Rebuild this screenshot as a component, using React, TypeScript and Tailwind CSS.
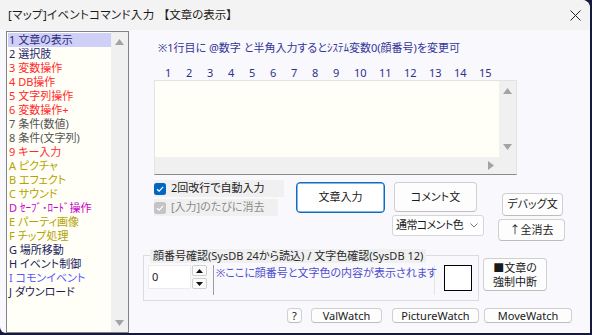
import React from 'react';

const items = [
  { t: '1 文章の表示', c: 'text-[#2c2c7c]' },
  { t: '2 選択肢', c: 'text-[#262670]' },
  { t: '3 変数操作', c: 'text-[#ff2a2a]' },
  { t: '4 DB操作', c: 'text-[#ff2a2a]' },
  { t: '5 文字列操作', c: 'text-[#ff2a2a]' },
  { t: '6 変数操作+', c: 'text-[#ff2a2a]' },
  { t: '7 条件(数値)', c: 'text-[#555555]' },
  { t: '8 条件(文字列)', c: 'text-[#555555]' },
  { t: '9 キー入力', c: 'text-[#ff2a2a]' },
  { t: 'A ピクチャ', c: 'text-[#b3a300]' },
  { t: 'B エフェクト', c: 'text-[#b3a300]' },
  { t: 'C サウンド', c: 'text-[#b3a300]' },
  { t: 'D ｾｰﾌﾞ･ﾛｰﾄﾞ操作', c: 'text-[#c800c8]' },
  { t: 'E パーティ画像', c: 'text-[#b3a300]' },
  { t: 'F チップ処理', c: 'text-[#b3a300]' },
  { t: 'G 場所移動', c: 'text-[#20205c]' },
  { t: 'H イベント制御', c: 'text-[#20205c]' },
  { t: 'I コモンイベント', c: 'text-[#5a5aff]' },
  { t: 'J ダウンロード', c: 'text-[#1c1c50]' },
];

function Tri({ dir, color = '#a3a3a3' }: { dir: 'up' | 'down' | 'right'; color?: string }) {
  if (dir === 'right')
    return (
      <svg width="6" height="9" viewBox="0 0 6 9">
        <path d="M0 0 L6 4.5 L0 9Z" fill={color} />
      </svg>
    );
  return (
    <svg width="9" height="6" viewBox="0 0 9 6">
      <path d={dir === 'up' ? 'M0 6 L4.5 0 L9 6Z' : 'M0 0 L9 0 L4.5 6Z'} fill={color} />
    </svg>
  );
}

function Check({ bg }: { bg: string }) {
  return (
    <svg width="12" height="12" viewBox="0 0 12 12" className="shrink-0">
      <rect x="0" y="0" width="12" height="12" rx="2.5" fill={bg} />
      <path d="M3 6.2 L5.1 8.2 L9.2 3.8" stroke="#fff" strokeWidth="1.2" fill="none" />
    </svg>
  );
}

const btn =
  'rounded-[4px] border border-[#d0d0d0] border-b-[#bdbdbd] bg-[#fdfdfd] text-[#1a1a1a] flex items-center justify-center';

export default function App() {
  return (
    <div className="w-[592px] h-[335px] bg-[#17193a] font-['Noto_Sans','Noto_Sans_CJK_JP',sans-serif] [font-feature-settings:'palt'] text-[11px] text-[#1a1a1a]">
      <div className="w-[590px] h-[333px] bg-[#f9f9fd] rounded-tr-[8px] rounded-bl-[6px] overflow-hidden flex flex-col">
        {/* title bar */}
        <div className="h-[30px] bg-[#f3f3f3] flex items-center shrink-0 text-[11.5px] leading-[16px]">
          <span className="ml-[8px] tracking-[0.3px]">[マップ]イベントコマンド入力</span>
          <span className="ml-[9px]">【文章の表示】</span>
          <svg className="ml-auto mr-[9px]" width="11" height="11" viewBox="0 0 11 11">
            <path d="M0.5 0.5 L10.5 10.5 M10.5 0.5 L0.5 10.5" stroke="#222" strokeWidth="1" />
          </svg>
        </div>

        <div className="flex flex-1 min-h-0">
          {/* command list */}
          <div className="ml-[6px] mt-px w-[123px] h-[302px] border border-[#82828a] bg-[#fffff7] flex shrink-0">
            <div className="flex-1 pt-px pl-px">
              {items.map((it, i) => (
                <div
                  key={i}
                  className={`h-[14px] leading-[14px] pl-px whitespace-nowrap ${i === 0 ? 'bg-[#cfcff7]' : ''} ${it.c}`}
                >
                  {it.t}
                </div>
              ))}
            </div>
            <div className="w-[17px] bg-[#f0f0f0] flex flex-col items-center justify-between pt-[7px] pb-[6px]">
              <Tri dir="up" />
              <Tri dir="down" />
            </div>
          </div>

          {/* right side */}
          <div className="ml-[14px] w-[447px] flex flex-col">
            <div className="mt-[11px] pl-[15px] leading-[14px] text-[#34349a] whitespace-nowrap">
              ※1行目に @数字 と半角入力するとｼｽﾃﾑ変数0(顔番号)を変更可
            </div>
            <div className="mt-[11px] pl-[22px] flex leading-[14px] text-[#30308c]">
              {Array.from({ length: 15 }, (_, i) => (
                <span key={i} className={i < 9 ? 'w-[21px]' : 'w-[25px]'}>
                  {i + 1}
                </span>
              ))}
            </div>

            {/* message edit */}
            <div className="ml-[11px] w-[363px] h-[95px] border border-[#e3e3e3] border-b-[#8a8a8a] bg-[#fffff8] flex flex-col">
              <div className="flex flex-1 min-h-0">
                <div className="flex-1" />
                <div className="w-[17px] bg-[#f0f0f0] flex flex-col items-center justify-between pt-[7px] pb-[7px]">
                  <Tri dir="up" />
                  <Tri dir="down" />
                </div>
              </div>
              <div className="h-[17px] bg-[#f0f0f0] flex items-center justify-end pr-[22px]">
                <Tri dir="right" />
              </div>
            </div>

            {/* options + buttons */}
            <div className="flex mt-[5px] h-[62px]">
              <div className="ml-[11px] w-[130px] flex flex-col">
                <div className="h-[17px] bg-[#f0f0f0] flex items-center gap-[5px] whitespace-nowrap">
                  <Check bg="#0067c0" />
                  <span>2回改行で自動入力</span>
                </div>
                <div className="mt-[2px] w-[124px] h-[17px] bg-[#f0f0f0] flex items-center gap-[5px] text-[#8c8c8c] whitespace-nowrap">
                  <Check bg="#c4c4c4" />
                  <span>[入力]のたびに消去</span>
                </div>
              </div>
              <button className="ml-[12px] mt-[2px] w-[89px] h-[31px] rounded-[4px] border border-[#0f6cc4] bg-white shadow-[inset_0_0_0_0.5px_#0f6cc4] flex items-center justify-center">
                文章入力
              </button>
              <div className="ml-[7px] flex flex-col">
                <button className={`${btn} ml-[2px] mt-[2px] w-[83px] h-[30px]`}>コメント文</button>
                <div className="mt-[3px] w-[92px] h-[21px] rounded-[3px] border border-[#d6d6d6] bg-white flex items-center pl-[3px] pr-[5px] whitespace-nowrap">
                  <span className="tracking-[-0.6px]">通常コメント色</span>
                  <svg className="ml-auto" width="8" height="5" viewBox="0 0 8 5">
                    <path d="M0.5 0.5 L4 4 L7.5 0.5" stroke="#666" strokeWidth="0.9" fill="none" />
                  </svg>
                </div>
              </div>
              <div className="ml-[14px] flex flex-col">
                <button className={`${btn} ml-[4px] mt-[13px] w-[61px] h-[23px]`}>デバッグ文</button>
                <button className={`${btn} mt-[3px] w-[67px] h-[22px]`}>↑全消去</button>
              </div>
            </div>

            {/* face / color group */}
            <div className="flex mt-[7px]">
              <div className="relative w-[336px] pt-[6px]">
                <div className="h-[46px] border border-[#dcdcdc] flex pt-[9px] pl-[4px]">
                  <div className="w-[43px] h-[24px] bg-white border border-[#ececec] flex items-center pl-[3px]">0</div>
                  <div className="ml-px flex flex-col gap-[2px]">
                    <div className="w-[15px] h-[11px] border border-[#cfcfcf] bg-[#fbfbfb] rounded-[2px] flex items-center justify-center">
                      <svg width="7" height="4" viewBox="0 0 7 4">
                        <path d="M0 4 L3.5 0 L7 4Z" fill="#111" />
                      </svg>
                    </div>
                    <div className="w-[15px] h-[11px] border border-[#cfcfcf] bg-[#fbfbfb] rounded-[2px] flex items-center justify-center">
                      <svg width="7" height="4" viewBox="0 0 7 4">
                        <path d="M0 0 L7 0 L3.5 4Z" fill="#111" />
                      </svg>
                    </div>
                  </div>
                  <div className="ml-[6px] w-[222px] h-[30px] border-l border-[#9c9c9c] border-r border-r-[#e4e4e4] pl-[2px] pt-px leading-[14px] text-[#4f4fcc] whitespace-nowrap">
                    ※ここに顔番号と文字色の内容が表示されます
                  </div>
                  <div className="ml-[9px] w-[28px] h-[26px] border border-black bg-white" />
                </div>
                <div className="absolute left-[7px] top-0 h-[14px] leading-[14px] bg-[#f0f0f0] px-[3px] text-[#2a2a2a] whitespace-nowrap">
                  顔番号確認(SysDB 24から読込) / 文字色確認(SysDB 12)
                </div>
              </div>
              <button className={`${btn} ml-[4px] mt-[9px] w-[64px] h-[33px] flex-col leading-[14px]`}>
                <span>■文章の</span>
                <span>強制中断</span>
              </button>
            </div>

            {/* watch buttons */}
            <div className="flex mt-[7px] ml-[144px] leading-[13px]">
              <button className={`${btn} w-[15px] h-[15px]`}>?</button>
              <button className={`${btn} ml-[9px] w-[71px] h-[15px]`}>ValWatch</button>
              <button className={`${btn} ml-[10px] w-[87px] h-[15px]`}>PictureWatch</button>
              <button className={`${btn} ml-[5px] w-[88px] h-[15px]`}>MoveWatch</button>
            </div>
          </div>
        </div>
      </div>
    </div>
  );
}
